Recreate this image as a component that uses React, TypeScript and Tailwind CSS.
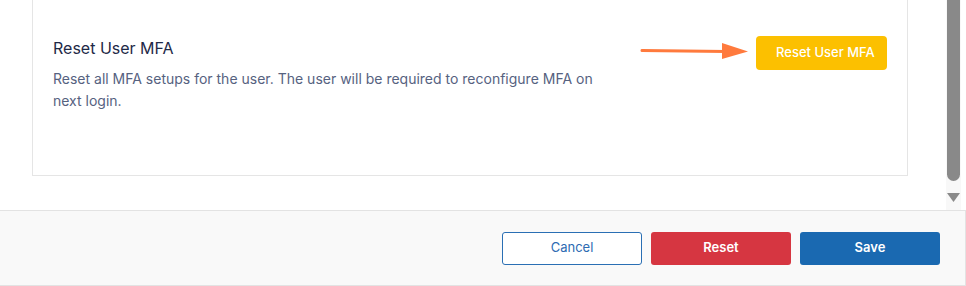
import React from 'react';

function ArrowRight() {
  return (
    <svg width="110" height="20" viewBox="0 0 110 20" className="shrink-0">
      <path d="M2 9.5 L86 10.5" stroke="#ff7a3d" strokeWidth="3" strokeLinecap="round" />
      <path d="M82 2 L108 10.5 L82 18 Z" fill="#ff7a3d" />
    </svg>
  );
}

function Scrollbar() {
  return (
    <div className="w-[15px] h-full bg-[#f8f8f8] flex flex-col items-center">
      <div className="w-[13px] flex-1 bg-[#898989] rounded-b-full" />
      <div className="h-[29px] flex items-start pt-[12px]">
        <svg width="13" height="10" viewBox="0 0 13 10">
          <path d="M0 0 L13 0 L6.5 9 Z" fill="#8a8a8a" />
        </svg>
      </div>
    </div>
  );
}

export default function App() {
  return (
    <div
      className="w-[966px] h-[286px] bg-white flex flex-col overflow-hidden"
      style={{ fontFamily: 'Inter, "Noto Sans", sans-serif' }}
    >
      <div className="h-[210px] flex">
        <div className="flex-1 pl-[32px] pr-[38px]">
          <div className="h-[176px] border-x border-b border-[#e5e5e5] pl-[20px] pr-[20px] pt-[37px] flex">
            <div className="flex-1">
              <h3 className="text-[16px] leading-[22px] text-[#1e2947]">Reset User MFA</h3>
              <p className="mt-[9px] max-w-[560px] text-[14px] leading-[22px] text-[#56627f]">
                Reset all MFA setups for the user. The user will be required to reconfigure MFA on next login.
              </p>
            </div>
            <div className="flex items-start gap-[6px] -mt-[1px]">
              <div className="mt-[5px]">
                <ArrowRight />
              </div>
              <button className="h-[34px] w-[131px] rounded-[4px] bg-[#fcc000] text-white text-[13px] font-medium whitespace-nowrap pl-[20px] pr-[12px] text-left">
                Reset User MFA
              </button>
            </div>
          </div>
        </div>
        <Scrollbar />
        <div className="w-[5px]" />
      </div>
      <div className="h-[76px] bg-[#f9f9f9] border-t border-b border-r border-[#e3e3e3] flex items-center justify-end gap-[9px] pr-[25px]">
        <button className="w-[140px] h-[33px] rounded-[3px] border border-[#2a6fb4] bg-white text-[#2d6bb2] text-[13px]">
          Cancel
        </button>
        <button className="w-[140px] h-[33px] rounded-[3px] bg-[#d63641] text-white text-[13px] font-semibold">
          Reset
        </button>
        <button className="w-[140px] h-[33px] rounded-[3px] bg-[#1a69b1] text-white text-[13px] font-semibold">
          Save
        </button>
      </div>
    </div>
  );
}
